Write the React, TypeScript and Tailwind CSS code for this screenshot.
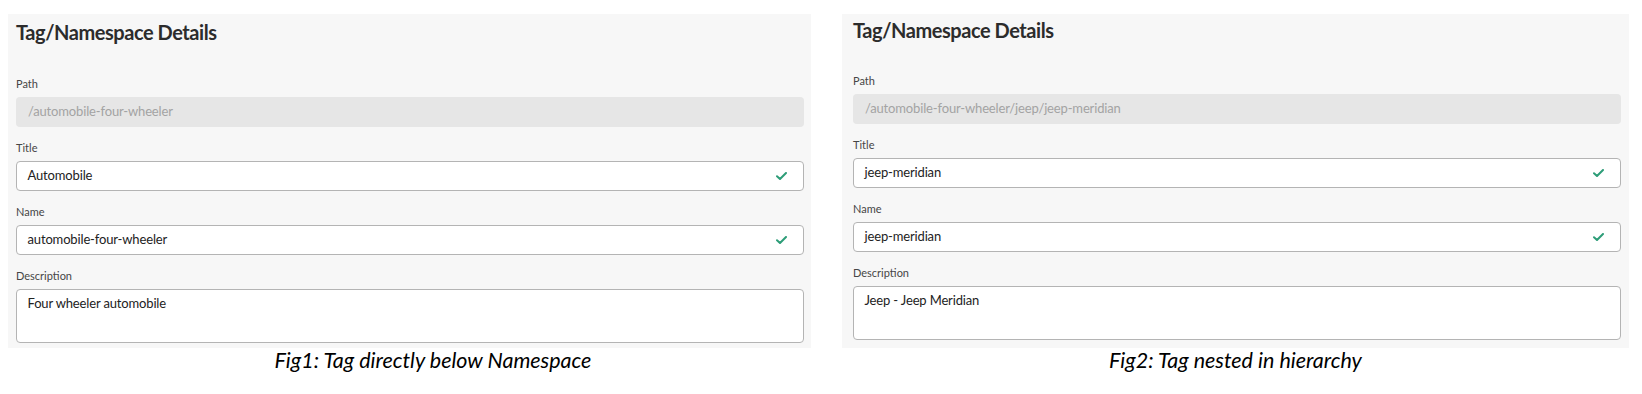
import React from "react";

type Field = { label: string; value: string; kind: "path" | "input" | "area" };

const CheckMark = () => (
	<svg width="11" height="8" viewBox="0 0 11 8" fill="none">
		<path d="M1 4.2 L4 7 L10 1" stroke="#2d9d78" strokeWidth="2" strokeLinecap="round" strokeLinejoin="round" />
	</svg>
);

const FormField = ({ field, first }: { field: Field; first: boolean }) => {
	return (
		<div className={first ? "flex flex-col" : "flex flex-col mt-[13px]"}>
			<span className="text-[11px] leading-4 text-[#464646] mb-[5px]">{field.label}</span>
			{field.kind === "path" && (
				<div className="h-[30px] rounded-[4px] bg-[#e6e6e6] px-3 flex items-center text-[13px] tracking-[-0.15px] text-[#a3a3a3]">
					{field.value}
				</div>
			)}
			{field.kind === "input" && (
				<div className="h-[30px] rounded-[4px] bg-white border-[1.5px] border-[#b4b4b4] pl-[10.5px] pr-[16px] flex items-center justify-between text-[13px] tracking-[-0.15px] text-[#222222]">
					<span>{field.value}</span>
					<CheckMark />
				</div>
			)}
			{field.kind === "area" && (
				<div className="h-[54px] rounded-[4px] bg-white border-[1.5px] border-[#b4b4b4] pl-[10.5px] pt-[4px] text-[13px] tracking-[-0.15px] leading-[18px] text-[#222222]">
					{field.value}
				</div>
			)}
		</div>
	);
};

const Figure = ({
	fields,
	caption,
	wide,
}: {
	fields: Field[];
	caption: string;
	wide: boolean;
}) => {
	return (
		<div className={wide ? "flex flex-col w-[803px]" : "flex flex-col w-[787px]"}>
			<div
				className={
					wide
						? "h-[334px] bg-[#f7f7f7] pl-2 pr-[7px] pt-1 flex flex-col"
						: "h-[334px] bg-[#f7f7f7] pl-[11px] pr-2 pt-[2px] flex flex-col"
				}>
				<h2 className="text-[20px] leading-7 font-bold text-[#2c2c2c] tracking-[-0.45px]">
					Tag/Namespace Details
				</h2>
				<div className={wide ? "mt-[30px] flex flex-col" : "mt-[29px] flex flex-col"}>
					{fields.map((f, i) => (
						<FormField key={f.label} field={f} first={i === 0} />
					))}
				</div>
			</div>
			<p
				className={
					wide
						? "pl-[47px] text-center italic text-[21.5px] leading-6 text-black"
						: "text-center italic text-[21.5px] leading-6 text-black"
				}>
				{caption}
			</p>
		</div>
	);
};

export default function App() {
	return (
		<div className="w-[1642px] h-[394px] bg-white flex pt-[14px] pl-2 gap-[31px] font-['Lato',sans-serif]">
			<Figure
				wide
				caption="Fig1: Tag directly below Namespace"
				fields={[
					{ label: "Path", value: "/automobile-four-wheeler", kind: "path" },
					{ label: "Title", value: "Automobile", kind: "input" },
					{ label: "Name", value: "automobile-four-wheeler", kind: "input" },
					{ label: "Description", value: "Four wheeler automobile", kind: "area" },
				]}
			/>
			<Figure
				wide={false}
				caption="Fig2: Tag nested in hierarchy"
				fields={[
					{ label: "Path", value: "/automobile-four-wheeler/jeep/jeep-meridian", kind: "path" },
					{ label: "Title", value: "jeep-meridian", kind: "input" },
					{ label: "Name", value: "jeep-meridian", kind: "input" },
					{ label: "Description", value: "Jeep - Jeep Meridian", kind: "area" },
				]}
			/>
		</div>
	);
}
